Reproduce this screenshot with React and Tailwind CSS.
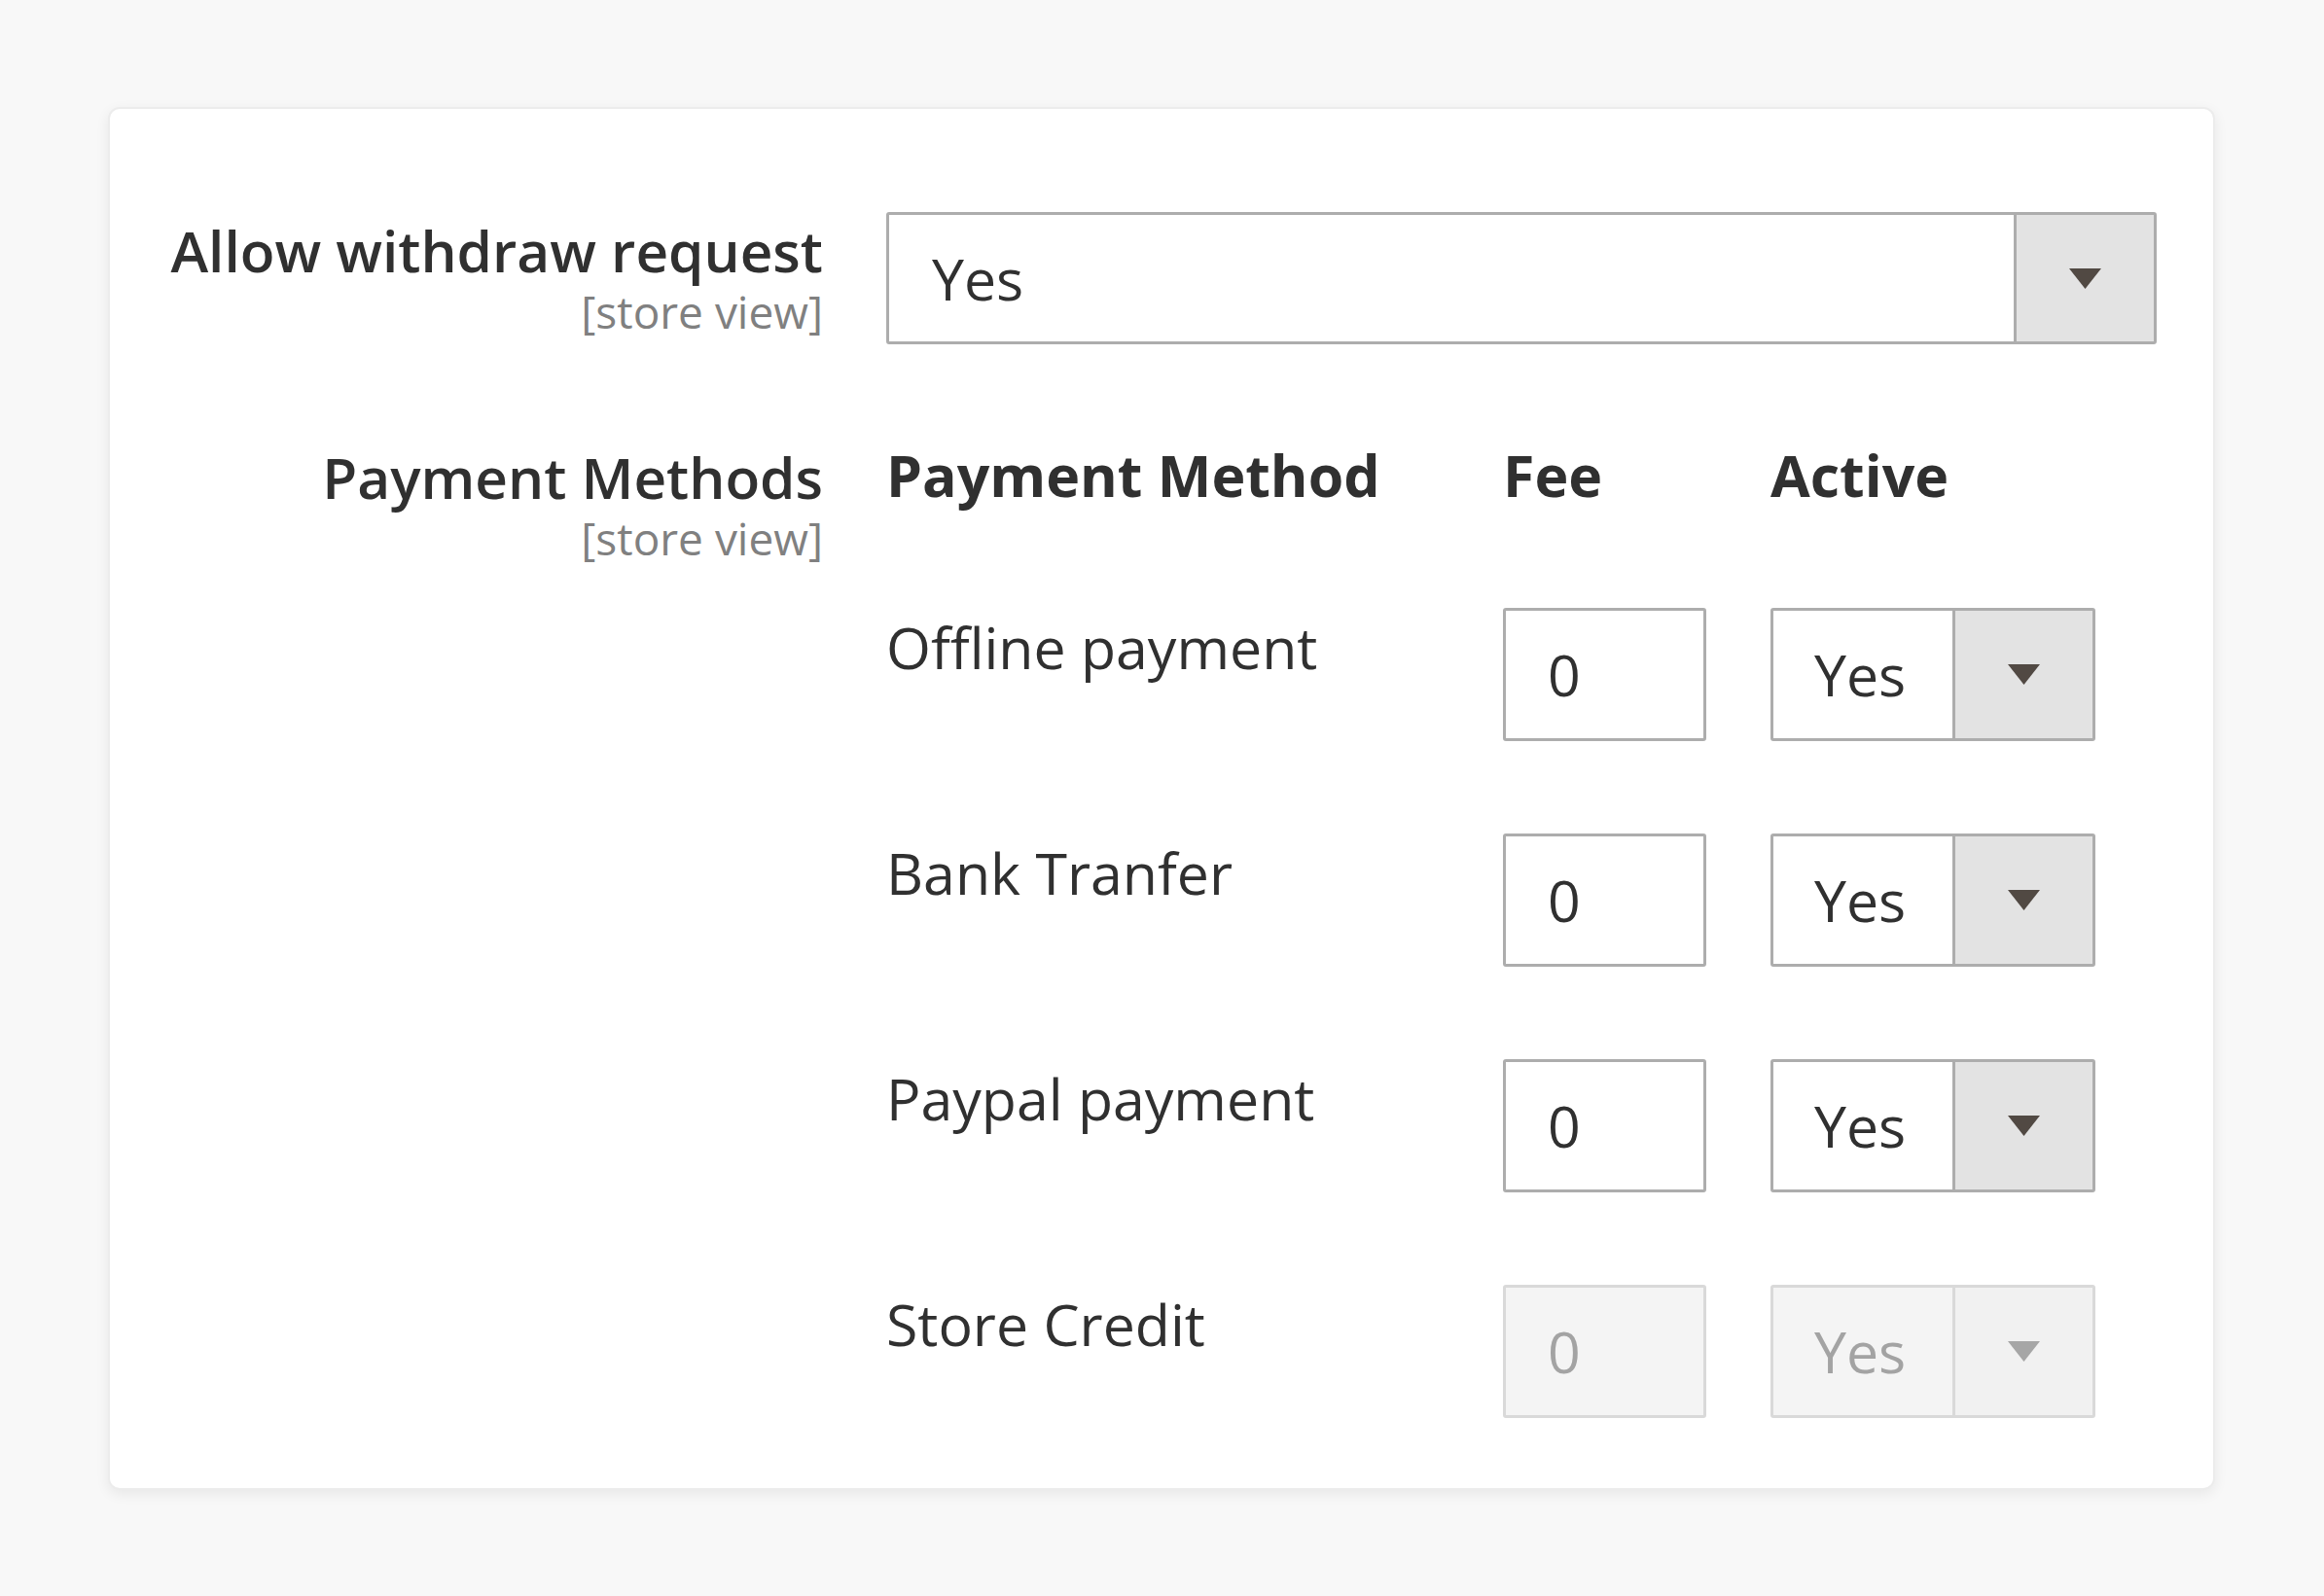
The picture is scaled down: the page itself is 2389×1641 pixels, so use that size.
import React from "react";

function Arrow({ disabled }) {
  return (
    <svg width="33" height="21" viewBox="0 0 33 21" className="block">
      <polygon points="0,0 33,0 16.5,21" fill={disabled ? "#a6a6a6" : "#514943"} />
    </svg>
  );
}

function Select({ value, wide, disabled }) {
  return (
    <div
      className={`flex ${wide ? "w-full h-[136px]" : "w-[334px] h-[137px]"} rounded-[3px] border-[3px] ${
        disabled ? "border-[#d9d9d9] bg-[#f4f4f4]" : "border-[#adadad] bg-white"
      }`}
    >
      <div
        className={`flex-1 flex items-center ${wide ? "pl-[44px]" : "pl-[42px]"} text-[59px] ${
          disabled ? "text-[#a3a3a3]" : "text-[#303030]"
        }`}
      >
        {value}
      </div>
      <div
        className={`w-[144px] flex items-center justify-center border-l-[3px] ${
          disabled ? "border-[#d9d9d9] bg-[#f1f1f1]" : "border-[#adadad] bg-[#e3e3e3]"
        }`}
      >
        <Arrow disabled={disabled} />
      </div>
    </div>
  );
}

function FeeInput({ disabled }) {
  return (
    <div
      className={`w-[209px] h-[137px] rounded-[3px] border-[3px] flex items-center pl-[43px] text-[59px] ${
        disabled
          ? "border-[#d9d9d9] bg-[#f4f4f4] text-[#a3a3a3]"
          : "border-[#adadad] bg-white text-[#303030]"
      }`}
    >
      0
    </div>
  );
}

function FieldLabel({ title }) {
  return (
    <div className="text-right">
      <div className="text-[58.5px] leading-[80px] font-semibold text-[#303030]">{title}</div>
      <div className="text-[46px] leading-[46px] text-[#808080]">[store view]</div>
    </div>
  );
}

const rows = [
  { name: "Offline payment" },
  { name: "Bank Tranfer" },
  { name: "Paypal payment" },
  { name: "Store Credit", disabled: true },
];

export default function App() {
  return (
    <div
      className="min-h-screen bg-[#f8f8f8] pt-[110px] pl-[111px] pb-[111px]"
      style={{ fontFamily: '"Open Sans", "Noto Sans", sans-serif' }}
    >
      <div className="w-[2166px] bg-white rounded-[12px] border-2 border-[#ececec] shadow-[0_4px_14px_rgba(0,0,0,0.07)] pt-[106px] pb-[72px] pr-[58px]">
        <div className="grid grid-cols-[733px_1fr] gap-x-[65px]">
          {/* Row 1 */}
          <div className="-mt-[1px]">
            <FieldLabel title="Allow withdraw request" />
          </div>
          <div>
            <Select value="Yes" wide />
          </div>

          {/* Row 2 */}
          <div className="mt-[96px]">
            <FieldLabel title="Payment Methods" />
          </div>
          <div className="mt-[94px] grid grid-cols-[634px_275px_334px] gap-y-[95px] items-start">
            <div className="text-[59px] leading-[80px] mb-[2px] font-bold text-[#303030]">Payment Method</div>
            <div className="text-[59px] leading-[80px] mb-[2px] font-bold text-[#303030]">Fee</div>
            <div className="text-[59px] leading-[80px] mb-[2px] font-bold text-[#303030]">Active</div>
            {rows.map((r) => (
              <React.Fragment key={r.name}>
                <div className="text-[59px] leading-[80px] text-[#303030]">{r.name}</div>
                <div>
                  <FeeInput disabled={r.disabled} />
                </div>
                <div>
                  <Select value="Yes" disabled={r.disabled} />
                </div>
              </React.Fragment>
            ))}
          </div>
        </div>
      </div>
    </div>
  );
}
